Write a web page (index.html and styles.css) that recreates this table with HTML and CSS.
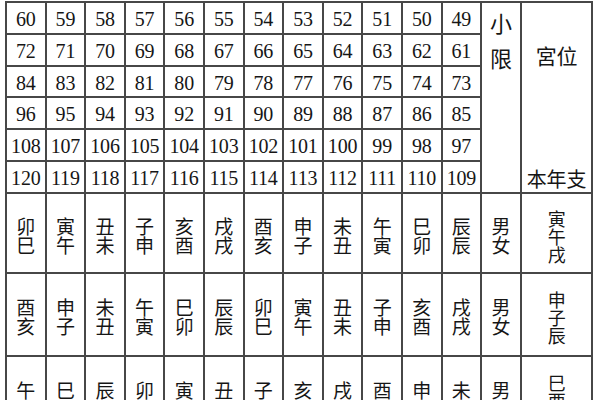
FILE: index.html
```html
<!DOCTYPE html>
<html lang="zh-Hant">
<head>
<meta charset="utf-8">
<title>小限表</title>
<link rel="stylesheet" href="styles.css">
</head>
<body>
<div class="sheet">
  <div class="xiao"><span>小</span><span>限</span></div>
  <div class="gong"><span class="gw">宮位</span><span class="bn">本年支</span></div>

  <div class="n">60</div><div class="n">59</div><div class="n">58</div><div class="n">57</div><div class="n">56</div><div class="n">55</div><div class="n">54</div><div class="n">53</div><div class="n">52</div><div class="n">51</div><div class="n">50</div><div class="n">49</div>
  <div class="n">72</div><div class="n">71</div><div class="n">70</div><div class="n">69</div><div class="n">68</div><div class="n">67</div><div class="n">66</div><div class="n">65</div><div class="n">64</div><div class="n">63</div><div class="n">62</div><div class="n">61</div>
  <div class="n">84</div><div class="n">83</div><div class="n">82</div><div class="n">81</div><div class="n">80</div><div class="n">79</div><div class="n">78</div><div class="n">77</div><div class="n">76</div><div class="n">75</div><div class="n">74</div><div class="n">73</div>
  <div class="n">96</div><div class="n">95</div><div class="n">94</div><div class="n">93</div><div class="n">92</div><div class="n">91</div><div class="n">90</div><div class="n">89</div><div class="n">88</div><div class="n">87</div><div class="n">86</div><div class="n">85</div>
  <div class="n">108</div><div class="n">107</div><div class="n">106</div><div class="n">105</div><div class="n">104</div><div class="n">103</div><div class="n">102</div><div class="n">101</div><div class="n">100</div><div class="n">99</div><div class="n">98</div><div class="n">97</div>
  <div class="n">120</div><div class="n">119</div><div class="n">118</div><div class="n">117</div><div class="n">116</div><div class="n">115</div><div class="n">114</div><div class="n">113</div><div class="n">112</div><div class="n">111</div><div class="n">110</div><div class="n">109</div>

  <div class="z"><span>卯</span><span>巳</span></div>
  <div class="z"><span>寅</span><span>午</span></div>
  <div class="z"><span>丑</span><span>未</span></div>
  <div class="z"><span>子</span><span>申</span></div>
  <div class="z"><span>亥</span><span>酉</span></div>
  <div class="z"><span>戌</span><span>戌</span></div>
  <div class="z"><span>酉</span><span>亥</span></div>
  <div class="z"><span>申</span><span>子</span></div>
  <div class="z"><span>未</span><span>丑</span></div>
  <div class="z"><span>午</span><span>寅</span></div>
  <div class="z"><span>巳</span><span>卯</span></div>
  <div class="z"><span>辰</span><span>辰</span></div>
  <div class="z"><span>男</span><span>女</span></div>
  <div class="p"><span>寅</span><span>午</span><span>戌</span></div>

  <div class="z"><span>酉</span><span>亥</span></div>
  <div class="z"><span>申</span><span>子</span></div>
  <div class="z"><span>未</span><span>丑</span></div>
  <div class="z"><span>午</span><span>寅</span></div>
  <div class="z"><span>巳</span><span>卯</span></div>
  <div class="z"><span>辰</span><span>辰</span></div>
  <div class="z"><span>卯</span><span>巳</span></div>
  <div class="z"><span>寅</span><span>午</span></div>
  <div class="z"><span>丑</span><span>未</span></div>
  <div class="z"><span>子</span><span>申</span></div>
  <div class="z"><span>亥</span><span>酉</span></div>
  <div class="z"><span>戌</span><span>戌</span></div>
  <div class="z"><span>男</span><span>女</span></div>
  <div class="p"><span>申</span><span>子</span><span>辰</span></div>

  <div class="z"><span>午</span><span>申</span></div>
  <div class="z"><span>巳</span><span>酉</span></div>
  <div class="z"><span>辰</span><span>戌</span></div>
  <div class="z"><span>卯</span><span>亥</span></div>
  <div class="z"><span>寅</span><span>子</span></div>
  <div class="z"><span>丑</span><span>丑</span></div>
  <div class="z"><span>子</span><span>寅</span></div>
  <div class="z"><span>亥</span><span>卯</span></div>
  <div class="z"><span>戌</span><span>辰</span></div>
  <div class="z"><span>酉</span><span>巳</span></div>
  <div class="z"><span>申</span><span>午</span></div>
  <div class="z"><span>未</span><span>未</span></div>
  <div class="z"><span>男</span><span>女</span></div>
  <div class="p"><span>巳</span><span>酉</span><span>丑</span></div>
</div>
</body>
</html>
```
FILE: styles.css
```css
html, body {
  margin: 0;
  padding: 0;
  background: #ffffff;
  overflow: hidden;
}

.sheet {
  display: grid;
  grid-template-columns: repeat(12, 37.6px) 38px 69px;
  grid-template-rows: 30px 30px 29px 30px 30px 30px 78px 81px 81px;
  gap: 2px;
  padding: 2px;
  margin: 1px 0 0 5px;
  width: max-content;
  background: #474747;
  color: #161616;
}

.sheet > div {
  background: #ffffff;
}

.n {
  font-family: "Liberation Serif", "Times New Roman", serif;
  font-size: 20px;
  line-height: 27px;
  padding-top: 3px;
  text-align: center;
  white-space: nowrap;
  letter-spacing: -0.2px;
}

.xiao {
  grid-column: 13;
  grid-row: 1 / span 6;
  display: flex;
  flex-direction: column;
  align-items: center;
  gap: 13px;
  padding-top: 8px;
  font-family: "Noto Sans CJK TC", "Noto Sans CJK SC", sans-serif;
  font-size: 22px;
  line-height: 22px;
  font-weight: 400;
}

.gong {
  grid-column: 14;
  grid-row: 1 / span 6;
  display: flex;
  flex-direction: column;
  align-items: center;
  justify-content: space-between;
  padding: 41px 0 2px;
  font-family: "Noto Sans CJK TC", "Noto Sans CJK SC", sans-serif;
  font-size: 21px;
  line-height: 22px;
  font-weight: 400;
}

.gong .bn {
  font-size: 20px;
}

.z, .p {
  display: flex;
  flex-direction: column;
  align-items: center;
  justify-content: center;
  padding-top: 3px;
  font-family: "Noto Sans CJK TC", "Noto Sans CJK SC", sans-serif;
  font-size: 19px;
  line-height: 19px;
  font-weight: 400;
}

.p {
  font-size: 18px;
  line-height: 18px;
  padding-top: 5px;
}
```
